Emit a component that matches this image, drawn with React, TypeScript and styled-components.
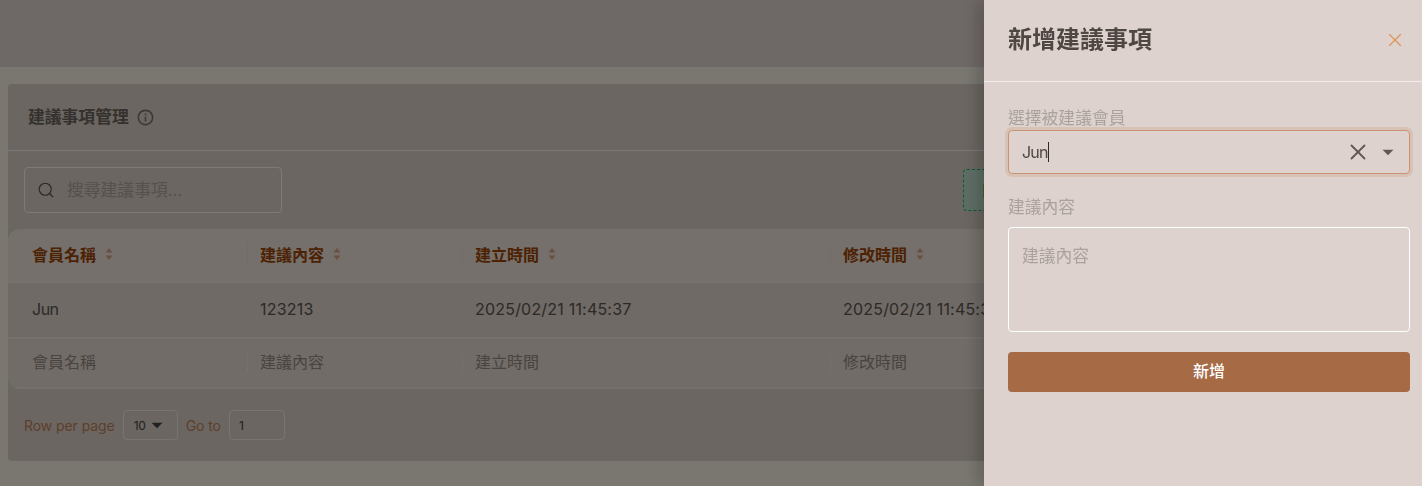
import React from 'react';
import styled, { createGlobalStyle } from 'styled-components';
import { MdArrowDropDown, MdInfoOutline } from 'react-icons/md';
import { Search, X } from 'lucide-react';

const columns = ['會員名稱', '建議內容', '建立時間', '修改時間'];
const row = ['Jun', '123213', '2025/02/21 11:45:37', '2025/02/21 11:45:37'];

const SortIcon: React.FC = () => (
    <SortSvg viewBox="0 0 8 14" width="8" height="14">
        <path d="M4 1 L7.5 5.5 H0.5 Z" />
        <path d="M4 13 L7.5 8.5 H0.5 Z" />
    </SortSvg>
);

const App: React.FC = () => {
    return (
        <>
            <GlobalStyle />
            <Page>
                <TopBar />
                <Main>
                    <Card>
                        <CardHead>
                            <CardTitle>建議事項管理</CardTitle>
                            <MdInfoOutline size={19} color="#7a706a" />
                        </CardHead>
                        <Toolbar>
                            <SearchBox>
                                <Search size={18} strokeWidth={1.5} color="#55504c" />
                                <SearchInput placeholder="搜尋建議事項..." />
                            </SearchBox>
                            <ImportButton>匯入</ImportButton>
                        </Toolbar>
                        <Sheet>
                            <TableRow $kind="head">
                                {columns.map((c, i) => (
                                    <Cell key={c} $first={i === 0} $kind="head">
                                        {c}
                                        <SortIcon />
                                    </Cell>
                                ))}
                            </TableRow>
                            <TableRow $kind="body">
                                {row.map((c, i) => (
                                    <Cell key={i} $first={i === 0} $kind="body">{c}</Cell>
                                ))}
                            </TableRow>
                            <TableRow $kind="foot">
                                {columns.map((c, i) => (
                                    <Cell key={c} $first={i === 0} $kind="foot">{c}</Cell>
                                ))}
                            </TableRow>
                        </Sheet>
                        <Pagination>
                            <PageLabel>Row per page</PageLabel>
                            <PageSelect>
                                10
                                <MdArrowDropDown size={26} color="#45403c" />
                            </PageSelect>
                            <PageLabel>Go to</PageLabel>
                            <PageInput defaultValue="1" />
                        </Pagination>
                    </Card>
                </Main>
            </Page>
            <Overlay />
            <Drawer>
                <DrawerHead>
                    <DrawerTitle>新增建議事項</DrawerTitle>
                    <CloseButton>
                        <X size={22} strokeWidth={1.2} />
                    </CloseButton>
                </DrawerHead>
                <Form>
                    <Field>
                        <FieldLabel>選擇被建議會員</FieldLabel>
                        <ComboBox>
                            <ComboValue>Jun<Caret /></ComboValue>
                            <X size={26} strokeWidth={1.7} color="#5f5853" />
                            <MdArrowDropDown size={26} color="#5f5853" />
                        </ComboBox>
                    </Field>
                    <Field>
                        <FieldLabel>建議內容</FieldLabel>
                        <TextArea placeholder="建議內容" />
                    </Field>
                    <SubmitButton>新增</SubmitButton>
                </Form>
            </Drawer>
        </>
    );
};

const GlobalStyle = createGlobalStyle`
    html, body {
        margin: 0;
        height: 100%;
        overflow: hidden;
    }
    body {
        font-family: Inter, "Noto Sans CJK TC", sans-serif;
        background: #f2eee1;
    }
    * {
        box-sizing: border-box;
    }
`;

const Page = styled.div`
    height: 486px;
    background: #f2eee1;
`;

const TopBar = styled.div`
    height: 67px;
    background: #ddd2cd;
`;

const Main = styled.div`
    padding: 17px 8px 0;
`;

const Card = styled.div`
    height: 377px;
    border-radius: 4px;
    background: #d6ccc2;
`;

const CardHead = styled.div`
    display: flex;
    align-items: center;
    gap: 7px;
    height: 67px;
    padding: 0 20px;
    border-bottom: 1px solid #f8f2ec;
`;

const CardTitle = styled.div`
    margin-top: -2px;
    font-size: 16.8px;
    font-weight: 700;
    color: #6a625c;
`;

const Toolbar = styled.div`
    display: flex;
    align-items: center;
    justify-content: space-between;
    height: 78px;
    padding: 0 8px 0 16px;
`;

const SearchBox = styled.div`
    display: flex;
    align-items: center;
    gap: 12px;
    width: 258px;
    height: 46px;
    padding: 0 12px;
    border: 1px solid #fbf6f0;
    border-radius: 4px;
`;

const SearchInput = styled.input`
    flex: 1;
    min-width: 0;
    border: 0;
    outline: 0;
    padding: 0;
    background: transparent;
    font: inherit;
    font-size: 16.8px;
    &::placeholder {
        color: #aaa29b;
    }
`;

const ImportButton = styled.div`
    display: flex;
    align-items: center;
    width: 443px;
    height: 42px;
    padding-left: 18px;
    border: 1px dashed #1eb46a;
    border-radius: 4px;
    background: #bcdccb;
    color: #1f9d5c;
    font-size: 16px;
`;

const Sheet = styled.div`
    border-radius: 12px;
    background: #ded4cc;
    overflow: hidden;
`;

const TableRow = styled.div<{ $kind: 'head' | 'body' | 'foot' }>`
    display: grid;
    grid-template-columns: 239px 215px 368px 1fr;
    align-items: center;
    height: ${p => (p.$kind === 'foot' ? 50 : p.$kind === 'head' ? 54 : 56)}px;
    background: ${p => (p.$kind === 'head' ? '#eae0d6' : p.$kind === 'foot' ? '#e2d8d0' : '#ded4cc')};
    border-bottom: 2px solid #ece2da;
`;

const Cell = styled.div<{ $first: boolean; $kind: 'head' | 'body' | 'foot' }>`
    display: flex;
    align-items: center;
    gap: 9px;
    height: ${p => (p.$kind === 'head' ? 22 : 18)}px;
    padding-left: ${p => (p.$first ? 24 : 12)}px;
    padding-bottom: ${p => (p.$kind === 'foot' ? 4 : 2)}px;
    border-left: ${p => (p.$first || p.$kind === 'body' ? '0' : p.$kind === 'head' ? '1px solid #e2d8ce' : '1px solid #ece2da')};
    margin-left: ${p => (p.$first || p.$kind !== 'body' ? 0 : 1)}px;
    font-size: 16px;
    white-space: nowrap;
    font-weight: ${p => (p.$kind === 'head' ? 700 : 400)};
    letter-spacing: ${p => (p.$kind !== 'body' ? 0 : p.$first ? -0.5 : 0.2)}px;
    color: ${p => (p.$kind === 'head' ? '#9a4508' : p.$kind === 'body' ? '#5a524d' : '#94897f')};
`;

const SortSvg = styled.svg`
    fill: #d3a184;
`;

const Pagination = styled.div`
    display: flex;
    align-items: center;
    gap: 8px;
    height: 72px;
    padding: 0 16px;
`;

const PageLabel = styled.span`
    font-size: 14px;
    letter-spacing: -0.08px;
    color: #bb7f58;
`;

const PageSelect = styled.div`
    display: flex;
    align-items: center;
    width: 55px;
    height: 30px;
    padding-left: 10px;
    border: 1px solid #f0e8e0;
    border-radius: 4px;
    font-size: 12px;
    letter-spacing: -0.2px;
    color: #45403c;
    svg {
        margin-left: -2px;
    }
`;

const PageInput = styled.input`
    width: 56px;
    height: 30px;
    padding: 0 9px;
    border: 1px solid #f0e8e0;
    border-radius: 4px;
    outline: 0;
    background: transparent;
    font: inherit;
    font-size: 12px;
    color: #45403c;
`;

const Overlay = styled.div`
    position: fixed;
    inset: 0;
    background: rgba(0, 0, 0, 0.5);
`;

const Drawer = styled.aside`
    position: fixed;
    top: 0;
    right: 0;
    bottom: 0;
    width: 438px;
    background: #ddd2cd;
    box-shadow: -6px 0 16px rgba(0, 0, 0, 0.2);
`;

const DrawerHead = styled.header`
    display: flex;
    align-items: center;
    justify-content: space-between;
    height: 82px;
    padding: 0 16px 3px 24px;
    border-bottom: 1px solid #f3eeea;
`;

const DrawerTitle = styled.h2`
    margin: -4px 0 0;
    font-size: 24px;
    font-weight: 700;
    color: #4f4743;
`;

const CloseButton = styled.div`
    display: flex;
    margin-top: 1px;
    color: #e08f55;
`;

const Form = styled.div`
    display: flex;
    flex-direction: column;
    padding: 24px 12px 0 24px;
`;

const Field = styled.div`
    display: flex;
    flex-direction: column;
    margin-bottom: 21px;
    & + & {
        margin-bottom: 20px;
    }
`;

const FieldLabel = styled.label`
    height: 24px;
    line-height: 24px;
    font-size: 16.8px;
    color: #aba29c;
`;

const ComboBox = styled.div`
    display: flex;
    align-items: center;
    gap: 4px;
    height: 44px;
    padding: 0 8px 0 13px;
    border: 1px solid #cb9372;
    border-radius: 4px;
    box-shadow: 0 0 0 3px rgba(203, 147, 114, 0.25);
`;

const ComboValue = styled.div`
    display: flex;
    align-items: center;
    flex: 1;
    font-size: 16px;
    letter-spacing: -0.8px;
    color: #4f4743;
`;

const Caret = styled.span`
    width: 1px;
    height: 20px;
    margin-left: 0.5px;
    background: #2f2a27;
`;

const TextArea = styled.textarea`
    height: 105px;
    margin-top: 8px;
    padding: 15px 13px;
    border: 1px solid #fff;
    border-radius: 4px;
    outline: 0;
    resize: none;
    background: transparent;
    font: inherit;
    font-size: 16.8px;
    &::placeholder {
        color: #aba29c;
    }
`;

const SubmitButton = styled.button`
    height: 40px;
    padding: 0 0 4px;
    border: 0;
    border-radius: 4px;
    background: #a66a45;
    color: #fff;
    font: inherit;
    font-size: 16px;
    font-weight: 500;
`;

export default App;
